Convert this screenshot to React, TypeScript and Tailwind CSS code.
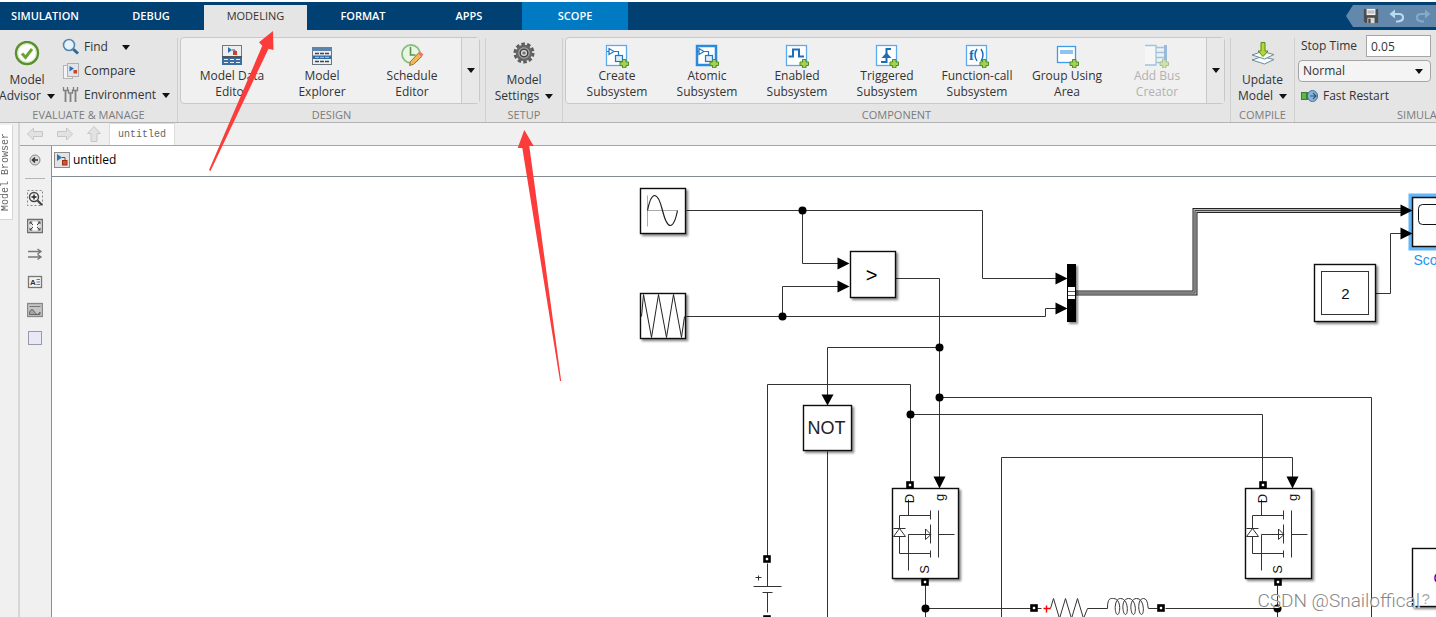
import { useState, type ReactNode } from 'react';

const TABS = ['SIMULATION', 'DEBUG', 'MODELING', 'FORMAT', 'APPS', 'SCOPE'];

function Caret() {
  return (
    <svg width="8" height="5" viewBox="0 0 8 5" className="shrink-0">
      <path d="M0 0H8L4 5Z" fill="#111" />
    </svg>
  );
}

// green plus badge used by the subsystem icons
function PlusBadge() {
  return (
    <path
      d="M17.500 15.500h3.500v2.500h2.500v3.500h-2.500v2.300h-3.500v-2.300h-2.500v-3.500h2.500z"
      fill="#a5d055"
      stroke="#4f8c22"
      strokeWidth="1"
    />
  );
}

function BlockPair() {
  return (
    <g fill="none" stroke="#1f7ac4" strokeWidth="1.2">
      <path d="M4 4.500v6l5-3zM2 7.500h2M9 7.500h4.500v4" />
      <rect x="10.500" y="11.500" width="7" height="6" fill="#dcecf9" />
    </g>
  );
}

function CreateIcon() {
  return (
    <svg width="24" height="24" viewBox="0 0 24 24">
      <rect x="1.500" y="1.500" width="20" height="20" fill="#fff" stroke="#5aaaf0" strokeWidth="1.300" />
      <BlockPair />
      <PlusBadge />
    </svg>
  );
}

function AtomicIcon() {
  return (
    <svg width="24" height="24" viewBox="0 0 24 24">
      <rect x="2" y="2" width="19" height="19" fill="#fff" stroke="#2a8ae0" strokeWidth="2.500" />
      <BlockPair />
      <PlusBadge />
    </svg>
  );
}

function EnabledIcon() {
  return (
    <svg width="24" height="24" viewBox="0 0 24 24">
      <rect x="1.500" y="1.500" width="20" height="20" fill="#fff" stroke="#5aaaf0" strokeWidth="1.300" />
      <path d="M3.500 12.500H8V5.500h6v7h5" fill="none" stroke="#1b6fb5" strokeWidth="2" />
      <PlusBadge />
    </svg>
  );
}

function TriggeredIcon() {
  return (
    <svg width="24" height="24" viewBox="0 0 24 24">
      <rect x="1.500" y="1.500" width="20" height="20" fill="#fff" stroke="#5aaaf0" strokeWidth="1.300" />
      <path d="M6 18h5.500V5H16" fill="none" stroke="#1b6fb5" strokeWidth="2" />
      <path d="M6.500 14l5-5.500 5 5.500z" fill="#1b6fb5" />
      <PlusBadge />
    </svg>
  );
}

function FunctionIcon() {
  return (
    <svg width="24" height="24" viewBox="0 0 24 24">
      <rect x="1.500" y="1.500" width="20" height="20" fill="#fff" stroke="#5aaaf0" strokeWidth="1.300" />
      <text x="4" y="16" fontSize="15" fontWeight="700" fill="#1b6fb5" fontFamily="Liberation Serif, serif">
        f
      </text>
      <path d="M12 5q-4 6 0 12M16 5q4 6 0 12" fill="none" stroke="#1b6fb5" strokeWidth="1.400" />
      <PlusBadge />
    </svg>
  );
}

function GroupIcon() {
  return (
    <svg width="24" height="24" viewBox="0 0 24 24">
      <rect x="2.500" y="2.500" width="18" height="16" fill="#fff" stroke="#3d9bec" strokeWidth="1.300" />
      <rect x="5" y="6" width="13" height="4" fill="#8dc4f5" />
      <PlusBadge />
    </svg>
  );
}

function BusIcon() {
  return (
    <svg width="24" height="24" viewBox="0 0 24 24" opacity="0.45">
      <rect x="0" y="1" width="11" height="20" fill="#fff" />
      <path d="M0 1.500h11v19.500H0M11 3.500h8M11 8.500h8M11 13.500h8M11 18.500h6" fill="none" stroke="#3d8fd0" strokeWidth="1.300" />
      <rect x="19" y="1" width="3" height="17" fill="#2a7dc4" />
      <PlusBadge />
    </svg>
  );
}

function ModelDataIcon() {
  return (
    <svg width="24" height="24" viewBox="0 0 24 24">
      <rect x="2.500" y="1.500" width="19" height="18" fill="#eceef0" stroke="#777" />
      <path d="M8 3v6l4-3z" fill="#2a6fb0" />
      <path d="M12 6h3v3" fill="none" stroke="#555" />
      <rect x="13" y="7" width="4" height="4" fill="#c8452a" />
      <rect x="2" y="12" width="20" height="2" fill="#555" />
      <rect x="2" y="14" width="20" height="7" fill="#3e6fa3" />
      <path d="M4 15.500h16M4 18.500h16" stroke="#e9eff5" strokeWidth="1.200" strokeDasharray="4 2" />
    </svg>
  );
}

function ExplorerIcon() {
  return (
    <svg width="24" height="24" viewBox="0 0 24 24">
      <rect x="2.500" y="3.500" width="19" height="17" fill="#eceff2" stroke="#6b7480" />
      <rect x="2" y="3" width="20" height="4" fill="#5c84ad" />
      <rect x="3" y="11.500" width="18" height="3.500" fill="#2e6aa8" />
      <path d="M5 9.500h14M5 17.500h14" stroke="#444" strokeWidth="1.300" strokeDasharray="4 1" />
      <path d="M5 13.300h14" stroke="#bcd" strokeWidth="1" strokeDasharray="4 1" />
    </svg>
  );
}

function ScheduleIcon() {
  return (
    <svg width="24" height="24" viewBox="0 0 24 24">
      <circle cx="11" cy="10" r="9" fill="#e8f6e2" stroke="#8bbd81" strokeWidth="1.800" />
      <path d="M10.500 3v8h5" fill="none" stroke="#5c9152" strokeWidth="1.600" />
      <path d="M9.500 21.500l1-4L18.500 9l3.500 3.200-8.300 8z" fill="#f5b659" stroke="#8f5a1e" strokeWidth="0.800" />
      <path d="M18 9.500l2-2 3.500 3-2 2.200z" fill="#e8747c" />
    </svg>
  );
}

function GearIcon() {
  return (
    <svg width="24" height="24" viewBox="0 0 24 24">
      <circle cx="12" cy="11" r="9" fill="none" stroke="#5c5c5c" strokeWidth="3" strokeDasharray="3.500 2.150" />
      <circle cx="12" cy="11" r="7" fill="#a9a9a9" stroke="#666" strokeWidth="2.500" />
      <circle cx="12" cy="11" r="3.800" fill="#e5e5e5" stroke="#444" strokeWidth="1.600" />
      <circle cx="12" cy="11" r="1.800" fill="#777" />
    </svg>
  );
}

function AdvisorIcon() {
  return (
    <svg width="26" height="26" viewBox="0 0 26 26">
      <circle cx="13" cy="12" r="11" fill="#fff" stroke="#5b8f2d" strokeWidth="2.400" />
      <circle cx="13" cy="12" r="9.300" fill="none" stroke="#c5e0a5" strokeWidth="1" />
      <path d="M8 12.500l3.500 4L18 8" fill="none" stroke="#6aa52f" strokeWidth="3" />
    </svg>
  );
}

function UpdateIcon() {
  return (
    <svg width="24" height="24" viewBox="0 0 24 24">
      <path d="M1 18l10-3.500 12 3-9.500 4.500z" fill="#f6fbfc" stroke="#6c8c98" />
      <path d="M1 13l10-3.500 12 3-9.500 4.500z" fill="#f6fbfc" stroke="#6c8c98" />
      <path d="M10 0.500h4v8.500h3L12 14.500 7 9h3z" fill="#b4d832" stroke="#5f8a16" />
    </svg>
  );
}

function FindIcon() {
  return (
    <svg width="18" height="18" viewBox="0 0 18 18">
      <path d="M11 11l5 4.500" stroke="#2d6799" strokeWidth="3" />
      <circle cx="7" cy="7" r="5.500" fill="#e6f3fb" stroke="#5687ad" strokeWidth="1.600" />
    </svg>
  );
}

function CompareIcon() {
  return (
    <svg width="18" height="18" viewBox="0 0 18 18">
      <rect x="1.500" y="3.500" width="9" height="13" fill="#f3f3f3" stroke="#b5b5b5" />
      <rect x="5.500" y="1.500" width="11" height="13" fill="#dfe5ea" stroke="#b0b0b0" />
      <path d="M7.500 4v5.500l4.500-3z" fill="#2a6fb0" />
      <rect x="11.500" y="8" width="3.500" height="3.500" fill="#c8452a" />
    </svg>
  );
}

function EnvironmentIcon() {
  return (
    <svg width="18" height="18" viewBox="0 0 18 18">
      <path d="M3.500 5v11M8.500 7.500v8.500M13.500 5v11" stroke="#808080" strokeWidth="1.800" />
      <path d="M1.500 1v3.500h4V1M6.500 3.500V7h4V3.500M11.500 1v3.500h4V1" fill="none" stroke="#808080" strokeWidth="1.300" />
    </svg>
  );
}

function RestartIcon() {
  return (
    <svg width="18" height="14" viewBox="0 0 18 14">
      <rect x="0.500" y="3.500" width="5" height="7" fill="#5ab947" stroke="#3c7a2e" />
      <path d="M6 3v8l3-1V4z" fill="#3a6f9c" />
      <ellipse cx="11.500" cy="7" rx="5" ry="5.500" fill="#8cb6d6" stroke="#3a6f9c" />
      <path d="M9 7h5.500M12 4l3 3-3 3" fill="none" stroke="#2c587f" strokeWidth="1.200" />
    </svg>
  );
}

function SimulinkIcon() {
  return (
    <svg width="16" height="16" viewBox="0 0 16 16">
      <rect x="0.500" y="0.500" width="15" height="15" fill="#e3e3e3" stroke="#8c8c8c" />
      <path d="M3 2v7l5-3.500z" fill="#2378b5" />
      <path d="M8 5.500h3v3" fill="none" stroke="#555" />
      <rect x="8.500" y="8.500" width="4.500" height="4.500" fill="#d9532c" stroke="#9c3014" />
    </svg>
  );
}

interface GalleryItem {
  lines: string[];
  icon: ReactNode;
  disabled?: boolean;
}

const DESIGN: GalleryItem[] = [
  { lines: ['Model Data', 'Editor'], icon: <ModelDataIcon /> },
  { lines: ['Model', 'Explorer'], icon: <ExplorerIcon /> },
  { lines: ['Schedule', 'Editor'], icon: <ScheduleIcon /> },
];

const COMPONENT: GalleryItem[] = [
  { lines: ['Create', 'Subsystem'], icon: <CreateIcon /> },
  { lines: ['Atomic', 'Subsystem'], icon: <AtomicIcon /> },
  { lines: ['Enabled', 'Subsystem'], icon: <EnabledIcon /> },
  { lines: ['Triggered', 'Subsystem'], icon: <TriggeredIcon /> },
  { lines: ['Function-call', 'Subsystem'], icon: <FunctionIcon /> },
  { lines: ['Group Using', 'Area'], icon: <GroupIcon /> },
  { lines: ['Add Bus', 'Creator'], icon: <BusIcon />, disabled: true },
];

function Gallery({ items, label }: { items: GalleryItem[]; label: string }) {
  return (
    <div className="mx-0.5 mt-[7px] flex rounded-sm border border-[#c8c8c8] bg-[#f0f0f0]">
      <div className="flex pr-1 pl-1.5">
        {items.map((item) => (
          <button
            key={item.lines.join(' ')}
            disabled={item.disabled}
            className="flex w-[90px] flex-col items-center pt-1.5 pb-[3px] text-[#333] disabled:text-[#b0b0b0]"
          >
            {item.icon}
            <span>{item.lines[0]}</span>
            <span>{item.lines[1]}</span>
          </button>
        ))}
      </div>
      <button aria-label={label} className="flex w-[18px] items-center justify-center border-l border-[#c8c8c8] bg-[#e8e8e8]">
        <Caret />
      </button>
    </div>
  );
}

function Section({ title, className, children }: { title: string; className: string; children: ReactNode }) {
  return (
    <section className={`flex shrink-0 flex-col ${className}`}>
      <div className="flex h-[77px] items-start">{children}</div>
      <h2 className="text-center text-[11px] leading-[15px] text-[#7b7b7b]">{title}</h2>
    </section>
  );
}

function BigButton({ icon, lines }: { icon: ReactNode; lines: string[] }) {
  return (
    <button className="flex w-full flex-col items-center pt-2 text-[#333]">
      <span className="flex h-8 items-center">{icon}</span>
      <span className="pt-0.5">{lines[0]}</span>
      <span className="flex items-center gap-1.5">
        {lines[1]}
        <Caret />
      </span>
    </button>
  );
}

function Separator() {
  return <div className="mt-2 w-px shrink-0 bg-[#cfcfcf]" />;
}

function TabBar() {
  const [active, setActive] = useState('MODELING');
  return (
    <nav className="mt-0.5 flex h-7 items-end justify-between bg-[#004073] text-[11px] text-white">
      <div className="-ml-2 flex h-full items-end">
        {TABS.map((tab) => (
          <button
            key={tab}
            onClick={() => setActive(tab)}
            className={
              tab === active
                ? 'mr-[3px] h-[25px] w-[103px] bg-[#e5e5e5] pb-0.5 text-[#333]'
                : tab === 'SCOPE'
                  ? 'h-full w-[106px] bg-[#007ac2] font-semibold'
                  : 'h-full w-[106px] font-semibold'
            }
          >
            {tab}
          </button>
        ))}
      </div>
      <div className="flex h-full items-center">
        <svg width="7" height="22" viewBox="0 0 7 22">
          <path d="M7 0L0 11l7 11z" fill="#6288ab" />
        </svg>
        <div className="flex h-[22px] w-[83px] items-center gap-2.5 bg-[#6288ab] pl-2.5">
          <button aria-label="Save">
            <svg width="16" height="16" viewBox="0 0 18 18">
              <path d="M1 1h16v16H3l-2-2z" fill="#4d4d4d" />
              <rect x="4" y="1" width="10" height="7" fill="#f2f2f2" />
              <path d="M5 3.500h8M5 5.500h8" stroke="#999" />
              <rect x="5" y="11" width="8" height="6" fill="#d8d8d8" />
              <rect x="6" y="12" width="2.500" height="5" fill="#444" />
            </svg>
          </button>
          <button aria-label="Undo">
            <svg width="16" height="16" viewBox="0 0 16 16">
              <path d="M4 6h6q4 0 4 3.500T9 13.500H7" fill="none" stroke="#b9daf2" strokeWidth="2.200" />
              <path d="M6 1.500v9L0.500 6z" fill="#b9daf2" />
            </svg>
          </button>
          <button aria-label="Redo">
            <svg width="16" height="16" viewBox="0 0 16 16">
              <path d="M12 6H6Q2 6 2 9.500t5 4h2" fill="none" stroke="#85a9c9" strokeWidth="2.200" />
              <path d="M10 1.500v9L15.500 6z" fill="#85a9c9" />
            </svg>
          </button>
        </div>
      </div>
    </nav>
  );
}

function Toolstrip() {
  return (
    <div className="flex overflow-hidden border-b border-[#b4b4b4] bg-[#e5e5e5] text-xs leading-4">
      <Section title="EVALUATE & MANAGE" className="w-[177px]">
        <div className="w-[54px] shrink-0">
          <BigButton icon={<AdvisorIcon />} lines={['Model', 'Advisor']} />
        </div>
        <div className="flex flex-col pt-[5px] pl-2 text-[#333]">
          <button className="flex h-6 items-center">
            <FindIcon />
            <span className="pr-3.5 pl-1">Find</span>
            <Caret />
          </button>
          <button className="flex h-6 items-center">
            <CompareIcon />
            <span className="pl-1">Compare</span>
          </button>
          <button className="flex h-6 items-center">
            <EnvironmentIcon />
            <span className="pr-1.5 pl-1">Environment</span>
            <Caret />
          </button>
        </div>
      </Section>
      <Separator />
      <Section title="DESIGN" className="w-[307px]">
        <Gallery items={DESIGN} label="More design tools" />
      </Section>
      <Separator />
      <Section title="SETUP" className="w-[76px]">
        <BigButton icon={<GearIcon />} lines={['Model', 'Settings']} />
      </Section>
      <Separator />
      <Section title="COMPONENT" className="w-[667px]">
        <Gallery items={COMPONENT} label="More components" />
      </Section>
      <Separator />
      <Section title="COMPILE" className="w-[63px]">
        <BigButton icon={<UpdateIcon />} lines={['Update', 'Model']} />
      </Section>
      <Separator />
      <Section title="SIMULATE" className="w-[256px]">
        <div className="flex w-[136px] flex-col pt-[5px] pl-[3px] text-[#333]">
          <div className="flex items-center justify-between">
            <label htmlFor="stop-time" className="pl-[3px]">Stop Time</label>
            <input
              id="stop-time"
              defaultValue="0.05"
              className="h-[22px] w-[65px] border border-[#a5a5a5] bg-white px-1"
            />
          </div>
          <div className="relative mt-[3px] flex">
            <select
              aria-label="Simulation mode"
              className="h-[22px] w-full appearance-none rounded border border-[#a5a5a5] bg-[#f4f4f4] px-1"
            >
              <option>Normal</option>
              <option>Accelerator</option>
            </select>
            <span className="pointer-events-none absolute inset-y-0 right-2 flex items-center">
              <Caret />
            </span>
          </div>
          <button className="flex h-7 items-center gap-1 pl-[3px]">
            <RestartIcon />
            Fast Restart
          </button>
        </div>
      </Section>
    </div>
  );
}

function NavArrow({ label, d }: { label: string; d: string }) {
  return (
    <button aria-label={label}>
      <svg width="16" height="16" viewBox="0 0 16 16">
        <path d={d} fill="#e2e2e2" stroke="#c6c6c6" />
      </svg>
    </button>
  );
}

const PALETTE = [
  {
    label: 'Zoom',
    icon: (
      <>
        <path d="M0.500 0.500h15v15h-15z" fill="none" stroke="#888" strokeDasharray="2 2" />
        <circle cx="7" cy="7" r="4.500" fill="#f4f4f4" stroke="#444" strokeWidth="1.400" />
        <path d="M4.500 7h5M7 4.500v5" stroke="#222" strokeWidth="1.400" />
        <path d="M10.500 10.500l4.500 4.500" stroke="#444" strokeWidth="2.200" />
      </>
    ),
  },
  {
    label: 'Fit to view',
    icon: (
      <>
        <rect x="0.500" y="1.500" width="15" height="13" fill="#e2e2e2" stroke="#6e6e6e" strokeWidth="1.500" />
        <path d="M6 4h4v8H6z" fill="#fff" />
        <path d="M2.500 6.500v-3h3zM10.500 3.500h3v3zM2.500 9.500v3h3zM10.500 12.500h3v-3z" fill="#444" />
        <path d="M4 5l2 2M12 5l-2 2M4 11l2-2M12 11l-2-2" stroke="#444" />
      </>
    ),
  },
  {
    label: 'Sample time',
    icon: <path d="M1 5.500h13M1 11h13M10.500 3l3.500 2.500L10.500 8M10.500 8.500L14 11l-3.500 2.500" fill="none" stroke="#777" strokeWidth="1.400" />,
  },
  {
    label: 'Annotation',
    icon: (
      <>
        <rect x="1.500" y="2.500" width="13" height="11" fill="#f2f2f2" stroke="#777" strokeWidth="1.300" />
        <text x="3" y="11" fontSize="8" fontWeight="700" fill="#333" fontFamily="Liberation Sans, sans-serif">A</text>
        <path d="M9.500 5.500h3.500M9.500 8h3.500M9.500 10.500h3.500" stroke="#777" />
      </>
    ),
  },
  {
    label: 'Image',
    icon: (
      <>
        <rect x="0.500" y="1.500" width="15" height="13" fill="#c4c4c4" stroke="#888" strokeWidth="1.300" />
        <path d="M2.500 4.500h11" stroke="#777" />
        <path d="M2.500 10q2.500-5 5 0t5.500 0v2.500H2.500z" fill="#a5a5a5" stroke="#666" />
      </>
    ),
  },
  {
    label: 'Area',
    icon: <rect x="1.500" y="1.500" width="13" height="13" fill="#e8e8f8" stroke="#9a9aa6" />,
  },
];

function Port({ x, y }: { x: number; y: number }) {
  return <rect x={x - 2} y={y - 2} width="5" height="5" fill="#fff" stroke="#000" strokeWidth="2.600" />;
}

function Mosfet({ dx }: { dx: number }) {
  return (
    <g transform={`translate(${dx} 0)`}>
      <rect x="892" y="488" width="66" height="90" fill="#fff" stroke="#111" strokeWidth="1.400" filter="url(#shadow)" />
      <g fill="none" stroke="#333">
        <path d="M908 499v16M899 515h31M930 510v9M899 515v13M893 528h12M899 528l-6 8h12zM899 536v17h31M930 550v7" />
        <path d="M908 570v-36h22M930 524v19M925 528.500l5.500 5.500-5.500 5zM938 510v47M938 534h16" />
      </g>
      <g fontSize="13" fill="#111" textAnchor="middle">
        <text transform="translate(913 498) rotate(-90)">D</text>
        <text transform="translate(943 497) rotate(-90)">g</text>
        <text transform="translate(928 569) rotate(-90)">S</text>
      </g>
      <Port x={909} y={484} />
      <Port x={924} y={581} />
      <path d="M933 476h12l-6 12z" />
    </g>
  );
}

const DOTS = [
  [802, 210],
  [782, 316],
  [939, 347],
  [939, 397],
  [910, 414],
  [925, 608],
  [1277, 608],
];

// tips of the arrow heads that point right
const HEADS = [
  [849, 263],
  [849, 286],
  [1067, 278],
  [1067, 308],
  [1412, 210],
  [1412, 233],
];

function Diagram() {
  return (
    <svg className="block min-h-[440px] w-full flex-1" fontFamily="Liberation Sans, Arial, sans-serif">
      <defs>
        <filter id="shadow" x="-20%" y="-20%" width="150%" height="150%">
          <feDropShadow dx="2" dy="2" stdDeviation="1.300" floodColor="#000" floodOpacity="0.45" />
        </filter>
      </defs>
      <g transform="translate(-51.5 -176.5)">
        <g fill="none" stroke="#333">
          <path d="M686 210H982V278H1057M802 210V263H840M782 316V286H840M686 316H1045V308H1057" />
          <path d="M895 278H939V478M939 347H827V396M827 451V620M939 397H1371V620" />
          <path d="M767 556V384H910V482M910 414H1262V482M1001 620V457H1292V478" />
          <path d="M925 585V620M925 608H1031M1165 608H1277M1277 585V620M1375 293H1390V233H1402" />
        </g>
        <g fill="none">
          <path d="M1075 292.500H1194.500V210H1402" stroke="#222" strokeWidth="5" />
          <path d="M1075 292.500H1194.500V210H1402" stroke="#bbb" strokeWidth="3" />
          <path d="M1075 292.500H1194.500V210H1402" stroke="#444" strokeWidth="1" />
        </g>

        <rect x="640" y="188" width="45" height="45" fill="#fff" stroke="#111" strokeWidth="1.400" filter="url(#shadow)" />
        <path d="M647 195V226M647 210H677" stroke="#aaa" />
        <path d="M647 210C651 190 657 190 662 210S673 230 677 210" fill="none" stroke="#222" strokeWidth="1.200" />

        <rect x="640" y="293" width="45" height="45" fill="#fff" stroke="#111" strokeWidth="1.400" filter="url(#shadow)" />
        <path d="M641 316L643 294 651 337 658 294 666 337 673 294 681 337 684 316" fill="none" stroke="#222" />

        <rect x="850" y="251" width="45" height="46" fill="#fff" stroke="#111" strokeWidth="1.400" filter="url(#shadow)" />
        <text x="871" y="281" fontSize="20" textAnchor="middle">&gt;</text>

        <rect x="803" y="405" width="48" height="45" fill="#fff" stroke="#111" strokeWidth="1.400" filter="url(#shadow)" />
        <text x="826" y="433" fontSize="18" fill="#222" textAnchor="middle">NOT</text>

        <rect x="1066.500" y="263.500" width="9" height="58" filter="url(#shadow)" />
        <path d="M1067.500 286.500h7v12h-7z" fill="#fff" />
        <path d="M1067.500 291h7M1067.500 295h7" stroke="#555" />

        <rect x="1314" y="264" width="61" height="57" fill="#fff" stroke="#111" strokeWidth="1.400" filter="url(#shadow)" />
        <rect x="1321" y="271" width="47" height="43" fill="none" stroke="#333" />
        <text x="1345" y="298" fontSize="15" fill="#111" textAnchor="middle">2</text>

        <rect x="1408" y="193" width="70" height="57" fill="#63b8fb" />
        <rect x="1412" y="197" width="62" height="49" fill="#fff" stroke="#111" strokeWidth="1.500" />
        <rect x="1418" y="204" width="48" height="20" rx="4" fill="none" stroke="#111" />
        <text x="1413" y="264" fontSize="14" fill="#2196f3">Scope</text>

        <Mosfet dx={0} />
        <Mosfet dx={353} />
        <path d="M821 394h12l-6 11z" />
        {HEADS.map(([x, y]) => (
          <path key={`${x}-${y}`} d={`M${x} ${y}l-12 -6v12z`} />
        ))}
        {DOTS.map(([x, y]) => (
          <circle key={`${x}-${y}`} cx={x} cy={y} r="4" />
        ))}

        {/* battery */}
        <path d="M767 563V586M753 586H781M762 592H772M767 592V612M755 577h6M758 575v5" stroke="#333" />
        <Port x={766} y={558} />
        <Port x={766} y={618} />

        {/* RL branch */}
        <path
          d="M1037 608h4M1050 608l3-10 6 20 6-20 6 20 6-20 6 20 4-10h20c0-11 3-10 6-10 8 0 7 16 4 16s-4-16 3-16c8 0 8 16 5 16s-5-16 3-16c8 0 8 16 5 16s-5-16 3-16c8 0 8 16 5 16s-5-16 2-16c5 0 4 10 5 10h9"
          fill="none"
          stroke="#333"
        />
        <path d="M1043 608h7M1046 605v7" stroke="#f00" strokeWidth="1.400" />
        <Port x={1033} y={607} />
        <Port x={1160} y={607} />

        <rect x="1412" y="548" width="70" height="58" fill="#fff" stroke="#111" strokeWidth="1.400" filter="url(#shadow)" />
        <text x="1433" y="582" fontSize="14" fill="#00c">Continuous</text>
        <text x="1421" y="603" fontSize="15" fill="#aaa">?</text>
      </g>
    </svg>
  );
}

function Palette() {
  return (
    <aside className="flex w-8 shrink-0 flex-col items-center border-r border-[#8a8f96] pr-px">
      <button aria-label="Hide browser" className="mt-1.5">
        <svg width="16" height="16" viewBox="0 0 16 16">
          <circle cx="8" cy="8" r="5" fill="#ddd" stroke="#888" />
          <path d="M11 8H6M8 5.500L5.500 8 8 10.500" fill="none" stroke="#333" strokeWidth="1.600" />
        </svg>
      </button>
      <div className="mt-2.5 h-px w-5 bg-[#b5b5b5]" />
      <div className="mt-[11px] flex flex-col gap-3">
        {PALETTE.map((item) => (
          <button key={item.label} aria-label={item.label}>
            <svg width="16" height="16" viewBox="0 0 16 16">{item.icon}</svg>
          </button>
        ))}
      </div>
    </aside>
  );
}

export default function App() {
  return (
    <div className="relative flex min-h-screen flex-col overflow-hidden bg-white font-['Open_Sans','Noto_Sans',sans-serif] text-black">
      <TabBar />
      <Toolstrip />
      <div className="flex flex-1 bg-[#f0f0f0]">
        <div className="flex w-[18px] shrink-0 items-start pt-0.5">
          <button className="w-[13px] border-r border-b border-[#d5d5d5] bg-white py-2 font-['Liberation_Mono',monospace] text-[10px] leading-3 text-[#666]">
            <span className="block rotate-180 [writing-mode:vertical-rl]">Model Browser</span>
          </button>
        </div>
        <div className="flex min-w-0 flex-1 flex-col border-l-2 border-[#d6d6d6]">
          <div className="flex h-[23px] items-end border-b border-[#a3a6aa]">
            <div className="flex w-[89px] items-center justify-between self-center pr-[7px] pl-[7px]">
              <NavArrow label="Back" d="M0.500 8l6-6v3.500h9v5h-9V14z" />
              <NavArrow label="Forward" d="M15.500 8l-6-6v3.500h-9v5h9V14z" />
              <NavArrow label="Up" d="M8 0.500l6.500 7h-3.500v8H5v-8H1.500z" />
            </div>
            <button className="h-[22px] border-x border-t border-[#dcdcdc] bg-white px-2 font-['Liberation_Mono',monospace] text-[10px] text-[#666]">
              untitled
            </button>
          </div>
          <div className="flex flex-1">
            <Palette />
            <main className="flex min-w-0 flex-1 flex-col bg-white">
              <div className="flex h-[31px] items-center gap-[3px] border-b border-[#858b93] pb-0.5 pl-0.5 text-xs">
                <SimulinkIcon />
                untitled
              </div>
              <Diagram />
            </main>
          </div>
        </div>
      </div>

      {/* annotation arrows */}
      <svg className="pointer-events-none absolute top-0 left-0" width="600" height="400" fill="#fb3c3a">
        <path d="M273 31L259 42.300 262.300 45.700 209 170 210.500 171 268.500 48.700 273.500 50z" />
        <path d="M524.300 130L517.700 148 522.300 148 560 381 561.200 381 529.300 146 533.700 146z" />
      </svg>
      <p className="absolute right-4 bottom-1 font-['Roboto',sans-serif] text-[19px] leading-6 font-light text-[#888] [text-shadow:1px_1px_0_white]">
        CSDN @Snailoffical
      </p>
    </div>
  );
}
